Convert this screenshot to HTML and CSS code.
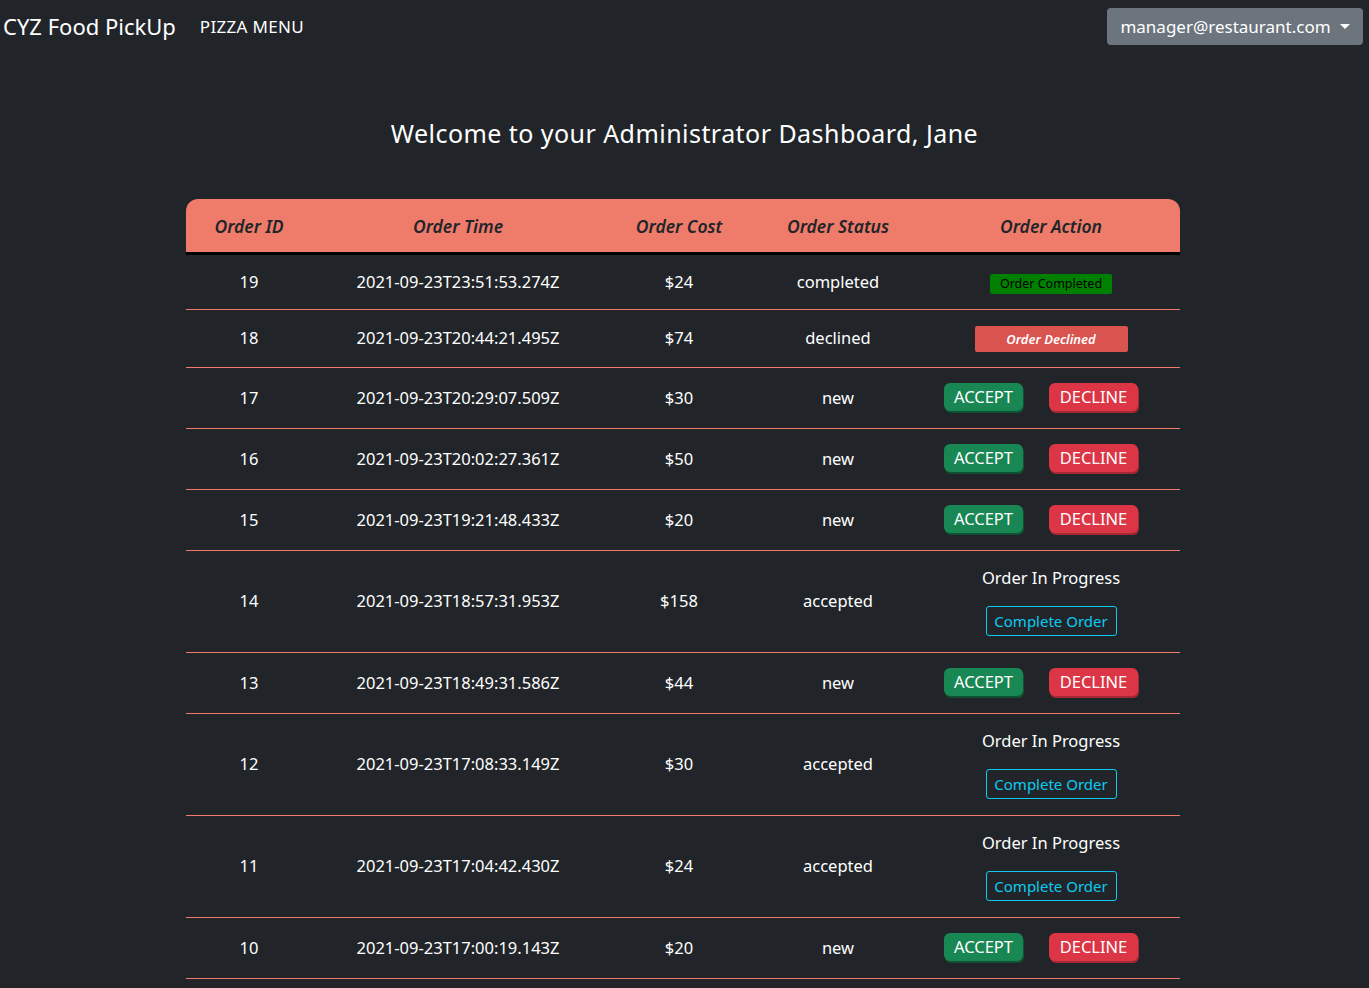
FILE: index.html
```html
<!DOCTYPE html>
<html lang="en">
<head>
<meta charset="utf-8">
<title>CYZ Food PickUp</title>
<link rel="stylesheet" href="styles.css">
</head>
<body>
<nav class="navbar">
  <div class="nav-left">
    <span class="brand">CYZ Food PickUp</span>
    <span class="nav-link">PIZZA MENU</span>
  </div>
  <button class="user-btn">manager@restaurant.com <span class="caret"></span></button>
</nav>
<main class="main">
  <h1 class="title">Welcome to your Administrator Dashboard, Jane</h1>
  <div class="table-wrap">
    <table class="orders">
      <thead>
        <tr>
          <th class="c-id">Order ID</th>
          <th class="c-time">Order Time</th>
          <th class="c-cost">Order Cost</th>
          <th class="c-status">Order Status</th>
          <th class="c-action">Order Action</th>
        </tr>
      </thead>
      <tbody>
        <tr><td>19</td><td>2021-09-23T23:51:53.274Z</td><td>$24</td><td>completed</td><td><span class="badge-complete">Order Completed</span></td></tr>
        <tr><td>18</td><td>2021-09-23T20:44:21.495Z</td><td>$74</td><td>declined</td><td><span class="badge-declined">Order Declined</span></td></tr>
        <tr><td>17</td><td>2021-09-23T20:29:07.509Z</td><td>$30</td><td>new</td><td><div class="actions"><button class="btn-accept">ACCEPT</button><button class="btn-decline">DECLINE</button></div></td></tr>
        <tr><td>16</td><td>2021-09-23T20:02:27.361Z</td><td>$50</td><td>new</td><td><div class="actions"><button class="btn-accept">ACCEPT</button><button class="btn-decline">DECLINE</button></div></td></tr>
        <tr><td>15</td><td>2021-09-23T19:21:48.433Z</td><td>$20</td><td>new</td><td><div class="actions"><button class="btn-accept">ACCEPT</button><button class="btn-decline">DECLINE</button></div></td></tr>
        <tr><td>14</td><td>2021-09-23T18:57:31.953Z</td><td>$158</td><td>accepted</td><td><div class="progress"><span>Order In Progress</span><button class="btn-complete">Complete Order</button></div></td></tr>
        <tr><td>13</td><td>2021-09-23T18:49:31.586Z</td><td>$44</td><td>new</td><td><div class="actions"><button class="btn-accept">ACCEPT</button><button class="btn-decline">DECLINE</button></div></td></tr>
        <tr><td>12</td><td>2021-09-23T17:08:33.149Z</td><td>$30</td><td>accepted</td><td><div class="progress"><span>Order In Progress</span><button class="btn-complete">Complete Order</button></div></td></tr>
        <tr><td>11</td><td>2021-09-23T17:04:42.430Z</td><td>$24</td><td>accepted</td><td><div class="progress"><span>Order In Progress</span><button class="btn-complete">Complete Order</button></div></td></tr>
        <tr><td>10</td><td>2021-09-23T17:00:19.143Z</td><td>$20</td><td>new</td><td><div class="actions"><button class="btn-accept">ACCEPT</button><button class="btn-decline">DECLINE</button></div></td></tr>
      </tbody>
    </table>
  </div>
</main>
</body>
</html>
```

FILE: styles.css
```css
* { box-sizing: border-box; }
html, body {
  margin: 0;
  padding: 0;
  background: #212529;
  color: #ffffff;
  font-family: "Noto Sans", "DejaVu Sans", sans-serif;
}
.navbar {
  height: 52px;
  display: flex;
  align-items: center;
  justify-content: space-between;
  padding: 0 6px 0 3px;
}
.nav-left {
  display: flex;
  align-items: center;
  gap: 24px;
}
.brand {
  font-size: 22px;
  color: #ffffff;
}
.nav-link {
  font-size: 17px;
  letter-spacing: 0.3px;
  color: #ffffff;
}
.user-btn {
  height: 37px;
  width: 256px;
  margin-top: 1px;
  background: #6c757d;
  border: none;
  border-radius: 4px;
  color: #ffffff;
  font-family: inherit;
  font-size: 17px;
  display: flex;
  align-items: center;
  justify-content: center;
  gap: 9px;
  padding: 0 12px;
}
.caret {
  width: 0;
  height: 0;
  border-left: 5px solid transparent;
  border-right: 5px solid transparent;
  border-top: 5px solid #ffffff;
}
.main {
  padding-top: 66px;
  display: flex;
  flex-direction: column;
  align-items: center;
}
.title {
  margin: 0;
  font-size: 25px;
  font-weight: 400;
  line-height: 30px;
  color: #ffffff;
  letter-spacing: 0.45px;
}
.table-wrap {
  margin-top: 51px;
  width: 994px;
  margin-left: -3px;
}
.orders {
  width: 100%;
  border-collapse: separate;
  border-spacing: 0;
  background: #212529;
}
.orders th {
  background: #ef7b6b;
  color: #212529;
  font-style: italic;
  font-weight: 600;
  font-size: 17.5px;
  height: 56px;
  padding: 0;
  border-bottom: 3px solid #000000;
}
.orders th:first-child { border-top-left-radius: 12px; }
.orders th:last-child { border-top-right-radius: 12px; }
.c-id { width: 126px; }
.c-time { width: 292px; }
.c-cost { width: 150px; }
.c-status { width: 168px; }
.c-action { width: 258px; }
.orders td {
  text-align: center;
  font-size: 16.5px;
  line-height: 24px;
  padding: 15px 0 15px 0;
  border-bottom: 1px solid #ef7b6b;
  vertical-align: middle;
  color: #ffffff;
}
.badge-complete {
  display: inline-block;
  background: #008000;
  color: #000000;
  font-size: 12.5px;
  line-height: 20px;
  padding: 0 10px;
  border-radius: 2px;
}
.badge-declined {
  display: inline-block;
  background: #d9534f;
  color: #ffffff;
  font-size: 13px;
  font-style: italic;
  font-weight: 600;
  line-height: 26px;
  width: 153px;
  border-radius: 2px;
  vertical-align: middle;
}
.actions {
  display: flex;
  justify-content: center;
  gap: 26px;
  padding-bottom: 2px;
  margin-left: -20px;
}
.btn-accept, .btn-decline {
  font-family: inherit;
  font-size: 16.5px;
  color: #ffffff;
  height: 28px;
  border: none;
  border-radius: 6px;
  padding: 0;
}
.btn-accept {
  background: #198754;
  width: 79px;
  box-shadow: 1px 2px 0 #0f5132;
}
.btn-decline {
  background: #dc3545;
  width: 89px;
  box-shadow: 1px 2px 0 #a52834;
}
.progress {
  display: flex;
  flex-direction: column;
  align-items: center;
  gap: 16px;
  padding-bottom: 1px;
}
.btn-complete {
  font-family: inherit;
  font-size: 15px;
  color: #0dcaf0;
  background: transparent;
  border: 1px solid #0dcaf0;
  border-radius: 3px;
  height: 30px;
  width: 131px;
  padding: 0;
}
```
